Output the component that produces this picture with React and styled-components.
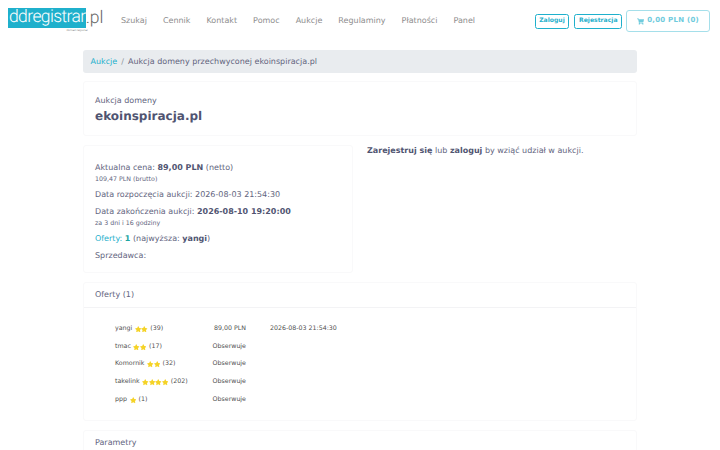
import React from "react";
import styled, { createGlobalStyle } from "styled-components";
import { FaShoppingCart, FaStar } from "react-icons/fa";

const GlobalStyle = createGlobalStyle`
  html, body {
    margin: 0;
    height: 450px;
    overflow: hidden;
    background: #fff;
    font-family: "DejaVu Sans", sans-serif;
    font-size: 8px;
    line-height: 13.5px;
    color: #62647e;
    text-rendering: geometricPrecision;
  }
  #root {
    opacity: 0.999;
  }
`;

const Nav = styled.nav`
  display: flex;
  align-items: flex-start;
  height: 50px;
  padding: 8px 10px 0 8px;
  box-sizing: border-box;
`;

const Logo = styled.div`
  position: relative;
  display: flex;
  align-items: center;
  width: 95px;
  height: 20px;
  font-family: "Roboto", sans-serif;
  font-weight: 300;
  font-size: 17.5px;
`;

const LogoMark = styled.span`
  background: #1fb0cc;
  color: #fff;
  height: 20px;
  line-height: 19px;
  width: 80px;
  padding-left: 1px;
  box-sizing: border-box;
  letter-spacing: -0.6px;
  white-space: nowrap;
`;

const LogoTld = styled.span`
  color: #666;
  line-height: 19px;
`;

const LogoSub = styled.span`
  position: absolute;
  right: 15px;
  top: 20px;
  font-size: 3px;
  line-height: 5px;
  color: #444;
  white-space: nowrap;
`;

const Menu = styled.div`
  display: flex;
  gap: 16px;
  margin-left: 18px;
  padding-top: 6px;
`;

const MenuLink = styled.a`
  color: #8d8d8d;
  white-space: nowrap;
`;

const Actions = styled.div`
  display: flex;
  align-items: center;
  margin-left: auto;
  margin-top: 2px;
`;

const SmallButton = styled.a`
  border: 1px solid #1fb0cc;
  border-radius: 2.5px;
  color: #1fb0cc;
  font-size: 6.1px;
  font-weight: 700;
  line-height: 10px;
  margin-right: ${(p) => p.$gap};
  padding: 1.5px 3.6px;
  white-space: nowrap;
`;

const CartButton = styled.a`
  display: flex;
  align-items: center;
  gap: 3px;
  height: 22px;
  box-sizing: border-box;
  border: 1px solid #a5dfea;
  border-radius: 3px;
  color: #6fcbdd;
  font-size: 7px;
  font-weight: 700;
  letter-spacing: 0.25px;
  padding: 0 10px;
  white-space: nowrap;
`;

const Container = styled.main`
  width: 554px;
  margin: 0 auto;
  display: flex;
  flex-direction: column;
  gap: 9px;
`;

const Breadcrumb = styled.div`
  display: flex;
  align-items: center;
  gap: 4px;
  height: 23px;
  margin-bottom: -1px;
  padding: 0 7.5px;
  background: #e9ecef;
  border-radius: 3px;
`;

const Crumb = styled.a`
  color: #1fb0cc;
`;

const Sep = styled.span`
  color: #8f959b;
`;

const Card = styled.section`
  border: 1px solid #f9f9fa;
  border-radius: 3px;
  background: #fff;
`;

const TitleCard = styled(Card)`
  height: 55px;
  box-sizing: border-box;
  padding: 12px 11px 0;
`;

const DomainName = styled.h1`
  margin: 0;
  font-size: 12px;
  line-height: 16px;
  font-weight: 700;
  color: #505471;
`;

const Columns = styled.div`
  display: flex;
  gap: 14px;
`;

const InfoCard = styled(Card)`
  width: 270px;
  height: 128px;
  box-sizing: border-box;
  flex: none;
  padding: 14.5px 11px 0;
`;

const InfoLine = styled.div`
  margin-bottom: ${(p) => (p.$tight ? "1px" : "3px")};
  white-space: nowrap;
`;

const Small = styled.div`
  font-size: 6.3px;
  line-height: 10px;
  margin-bottom: 3px;
`;

const Strong = styled.b`
  color: #505471;
`;

const Teal = styled.span`
  color: #1fb0cc;
`;

const TealStrong = styled.b`
  color: #20a5a0;
`;

const Notice = styled.p`
  margin: 0;
  line-height: 12px;
`;

const OffersCard = styled(Card)`
  height: 139px;
  box-sizing: border-box;
`;

const CardHeader = styled.div`
  height: 25px;
  box-sizing: border-box;
  padding: 5px 11px 0;
  border-bottom: 1px solid #f3f3f5;
`;

const OfferList = styled.div`
  display: flex;
  flex-direction: column;
  padding: 12px 0 0 31px;
`;

const OfferRow = styled.div`
  display: grid;
  grid-template-columns: 75px 32px 69px;
  column-gap: 24px;
  height: 17.8px;
  align-items: center;
  font-size: 6.3px;
  line-height: 10px;
  color: #505050;
  white-space: nowrap;
`;

const Bidder = styled.span`
  display: flex;
  align-items: center;
  gap: 2.5px;
`;

const Stars = styled.span`
  display: inline-flex;
  color: #f5d327;
  font-size: 6.5px;
  padding-top: 0.5px;
`;

const Amount = styled.span`
  justify-self: end;
`;

const ParamCard = styled(Card)`
  height: 60px;
  box-sizing: border-box;
  padding: 5px 11px 0;
`;

const menu = ["Szukaj", "Cennik", "Kontakt", "Pomoc", "Aukcje", "Regulaminy", "Płatności", "Panel"];

const offers = [
  { name: "yangi", stars: 2, count: 39, amount: "89,00 PLN", date: "2026-08-03 21:54:30" },
  { name: "tmac", stars: 2, count: 17, amount: "Obserwuje" },
  { name: "Komornik", stars: 2, count: 32, amount: "Obserwuje" },
  { name: "takelink", stars: 4, count: 202, amount: "Obserwuje" },
  { name: "ppp", stars: 1, count: 1, amount: "Obserwuje" },
];

export default function App() {
  return (
    <>
      <GlobalStyle />
      <Nav>
        <Logo>
          <LogoMark>ddregistrar</LogoMark>
          <LogoTld>.pl</LogoTld>
          <LogoSub>domain registrar</LogoSub>
        </Logo>
        <Menu>
          {menu.map((item) => (
            <MenuLink key={item}>{item}</MenuLink>
          ))}
        </Menu>
        <Actions>
          <SmallButton $gap="5px">Zaloguj</SmallButton>
          <SmallButton $gap="4px">Rejestracja</SmallButton>
          <CartButton>
            <FaShoppingCart size={7} />
            0,00 PLN (0)
          </CartButton>
        </Actions>
      </Nav>
      <Container>
        <Breadcrumb>
          <Crumb>Aukcje</Crumb>
          <Sep>/</Sep>
          <span>Aukcja domeny przechwyconej ekoinspiracja.pl</span>
        </Breadcrumb>
        <TitleCard>
          Aukcja domeny
          <DomainName>ekoinspiracja.pl</DomainName>
        </TitleCard>
        <Columns>
          <InfoCard>
            <InfoLine $tight>
              Aktualna cena: <Strong>89,00 PLN</Strong> (netto)
            </InfoLine>
            <Small>109,47 PLN (brutto)</Small>
            <InfoLine>Data rozpoczęcia aukcji: 2026-08-03 21:54:30</InfoLine>
            <InfoLine $tight>
              Data zakończenia aukcji: <Strong>2026-08-10 19:20:00</Strong>
            </InfoLine>
            <Small>za 3 dni i 16 godziny</Small>
            <InfoLine>
              <Teal>Oferty:</Teal> <TealStrong>1</TealStrong> (najwyższa: <Strong>yangi</Strong>)
            </InfoLine>
            <InfoLine>Sprzedawca:</InfoLine>
          </InfoCard>
          <Notice>
            <Strong>Zarejestruj się</Strong> lub <Strong>zaloguj</Strong> by wziąć udział w aukcji.
          </Notice>
        </Columns>
        <OffersCard>
          <CardHeader>Oferty (1)</CardHeader>
          <OfferList>
            {offers.map((o) => (
              <OfferRow key={o.name}>
                <Bidder>
                  {o.name}
                  <Stars>
                    {Array.from({ length: o.stars }, (_, i) => (
                      <FaStar key={i} />
                    ))}
                  </Stars>
                  ({o.count})
                </Bidder>
                <Amount>{o.amount}</Amount>
                <span>{o.date}</span>
              </OfferRow>
            ))}
          </OfferList>
        </OffersCard>
        <ParamCard>Parametry</ParamCard>
      </Container>
    </>
  );
}
